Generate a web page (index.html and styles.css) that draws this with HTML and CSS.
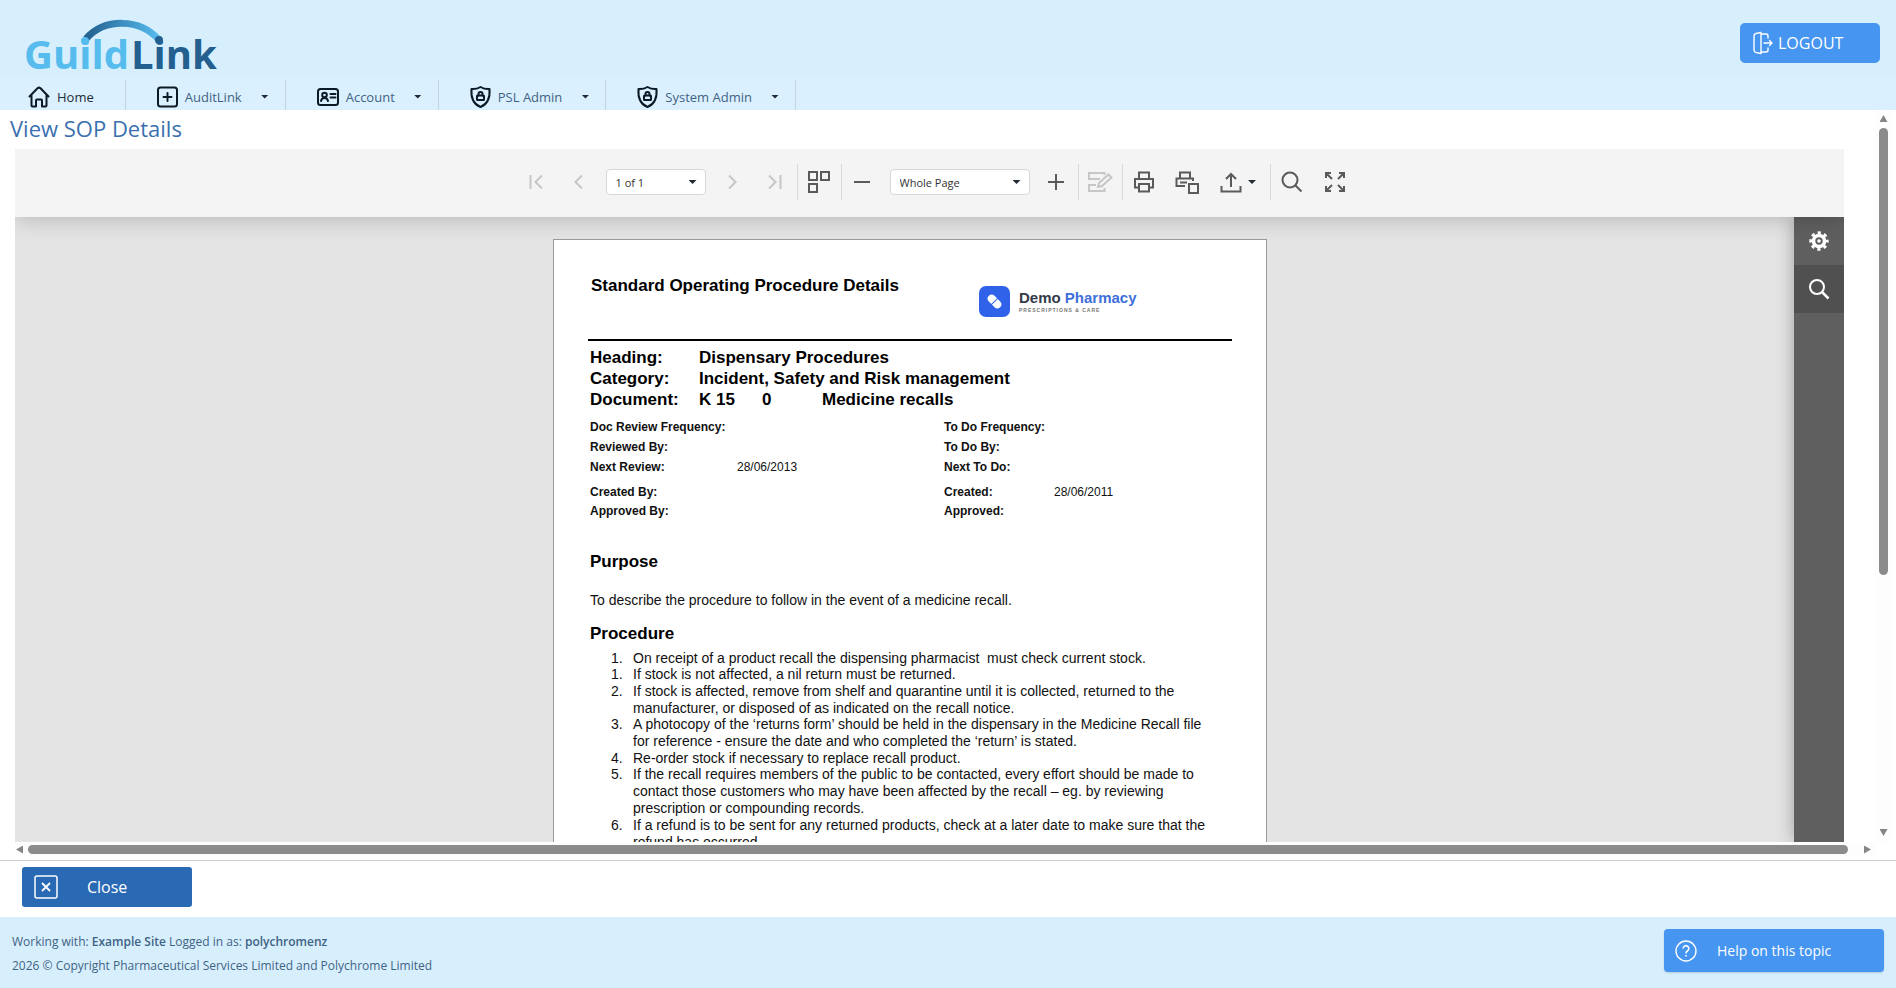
FILE: index.html
```html
<!DOCTYPE html>
<html lang="en">
<head>
<meta charset="utf-8">
<title>View SOP Details</title>
<link rel="stylesheet" href="styles.css">
</head>
<body>
<header class="masthead">
  <a class="brand" href="#" aria-label="GuildLink">
    <svg width="200" height="60" viewBox="0 0 200 60">
      <defs>
        <linearGradient id="arc" x1="0" x2="1" y1="0" y2="0"><stop offset="0" stop-color="#23608f"/><stop offset="1" stop-color="#56bcee"/></linearGradient>
      </defs>
      <text class="brand-text" x="0" y="55"><tspan class="brand-light">Guild</tspan><tspan class="brand-dark" dx="2">Link</tspan></text>
      <path d="M62 25C80 4 116 4 135 26" fill="none" stroke="url(#arc)" stroke-width="7"/>
      <circle cx="61" cy="27" r="4" fill="#56bcee"/>
      <circle cx="135" cy="26" r="4" fill="#23608f"/>
    </svg>
  </a>
  <button class="logout" type="button">
    <svg width="22" height="24" viewBox="0 0 22 24" fill="none" stroke="currentColor" stroke-width="1.4" stroke-linejoin="round" stroke-linecap="round"><path d="M9 1.500L4 2.500Q2 3 2 5v14q0 2 2 2.500l5 1zM9 3h5q2 0 2 2v2M9 21h5q2 0 2-2v-2M12 12h8M17.500 9.500L20 12l-2.500 2.500"/></svg>
    LOGOUT
  </button>
</header>
<nav class="menu">
  <a class="menu-item menu-home" href="#">
    <svg width="22" height="22" viewBox="0 0 22 22" class="ico"><path d="M1.500 10.500L9.500 2.200Q11 1 12.500 2.200L20.500 10.500M3.500 9v10.500q0 1 1 1H8v-6q0-1 1-1h4q1 0 1 1v6h3.500q1 0 1-1V9"/></svg>
    Home</a>
  <a class="menu-item" href="#">
    <svg width="21" height="22" viewBox="0 0 21 22" class="ico"><rect x="1" y="1.500" width="19" height="19" rx="2.500"/><path d="M10.500 7v8M6.500 11h8"/></svg>
    <span>AuditLink</span><i class="caret"></i></a>
  <a class="menu-item" href="#">
    <svg width="22" height="22" viewBox="0 0 22 22" class="ico"><rect x="1" y="3" width="20" height="16" rx="2.500"/><path d="M4 15q.5-3 3.500-3t3.500 3M13.500 8h5M13.500 11.500h5" /><circle cx="7.500" cy="9" r="2.300"/></svg>
    <span>Account</span><i class="caret"></i></a>
  <a class="menu-item" href="#">
    <svg width="21" height="22" viewBox="0 0 21 22" class="ico"><path d="M10.500 1C8 2.500 4.500 3.200 1.500 3c-.6 7 .5 14.500 9 18 8.500-3.500 9.600-11 9-18-3 .2-6.500-.5-9-2z"/><rect x="7" y="9.500" width="7" height="4.500" rx=".5"/><path d="M8.500 9.500V8a2 2 0 0 1 4 0v1.500"/></svg>
    <span>PSL Admin</span><i class="caret"></i></a>
  <a class="menu-item" href="#">
    <svg width="21" height="22" viewBox="0 0 21 22" class="ico"><path d="M10.500 1C8 2.500 4.500 3.200 1.500 3c-.6 7 .5 14.500 9 18 8.500-3.500 9.600-11 9-18-3 .2-6.500-.5-9-2z"/><rect x="7" y="9.500" width="7" height="4.500" rx=".5"/><path d="M8.500 9.500V8a2 2 0 0 1 4 0v1.500"/></svg>
    <span>System Admin</span><i class="caret"></i></a>
</nav>

<main class="workspace">
  <div class="content">
    <h1 class="page-title">View SOP Details</h1>
    <section class="viewer">
      <div class="toolbar">
        <button class="tool" type="button" disabled aria-label="First page"><svg width="24" height="24" viewBox="0 0 24 24"><path d="M6.500 5v14M18 5.500L11.500 12l6.500 6.500"/></svg></button>
        <button class="tool" type="button" disabled aria-label="Previous page"><svg width="24" height="24" viewBox="0 0 24 24"><path d="M15 5.500L8.500 12l6.500 6.500"/></svg></button>
        <label class="picker picker-page"><select aria-label="Page"><option>1 of 1</option></select><i class="caret"></i></label>
        <button class="tool" type="button" disabled aria-label="Next page"><svg width="24" height="24" viewBox="0 0 24 24"><path d="M9 5.500l6.500 6.500L9 18.500"/></svg></button>
        <button class="tool" type="button" disabled aria-label="Last page"><svg width="24" height="24" viewBox="0 0 24 24"><path d="M6 5.500l6.500 6.500L6 18.500M17.500 5v14"/></svg></button>
        <span class="rule"></span>
        <button class="tool" type="button" aria-label="Multipage"><svg width="24" height="24" viewBox="0 0 24 24"><path d="M2 2h8v8H2zM14 2h8v8h-8zM2 14h8v8H2z"/></svg></button>
        <span class="rule"></span>
        <button class="tool" type="button" aria-label="Zoom out"><svg width="24" height="24" viewBox="0 0 24 24"><path d="M3 12h16"/></svg></button>
        <label class="picker picker-zoom"><select aria-label="Zoom"><option>Whole Page</option></select><i class="caret"></i></label>
        <button class="tool" type="button" aria-label="Zoom in"><svg width="24" height="24" viewBox="0 0 24 24"><path d="M4 12h16M12 4v16"/></svg></button>
        <span class="rule"></span>
        <button class="tool" type="button" disabled aria-label="Edit fields"><svg width="26" height="24" viewBox="0 0 26 24"><path d="M17.500 5V3H2v6h11M9 15H2v6h15.500v-3M11 17l1-4 9.500-8.500 3 3L15 16z"/></svg></button>
        <span class="rule"></span>
        <button class="tool" type="button" aria-label="Print"><svg width="24" height="24" viewBox="0 0 24 24"><path d="M7 9V2.500h10V9M6 17.500H3V9h18v8.500h-3M7 14h10v7.500H7z"/></svg></button>
        <button class="tool" type="button" aria-label="Print page"><svg width="24" height="24" viewBox="0 0 24 24"><path d="M5 8V2.500h10V8M10 16H1.500V8.500H18V11M5 12.500h7M14 14h9v9h-9z"/></svg></button>
        <button class="tool tool-export" type="button" aria-label="Export to"><svg width="24" height="24" viewBox="0 0 24 24"><path d="M2.500 16v5.500h19V16M12 17V4M7 9l5-5 5 5"/></svg><i class="caret"></i></button>
        <span class="rule"></span>
        <button class="tool" type="button" aria-label="Search"><svg width="24" height="24" viewBox="0 0 24 24"><circle cx="10" cy="10" r="7.500"/><path d="M15.500 15.500l6 6"/></svg></button>
        <button class="tool" type="button" aria-label="Full screen"><svg width="24" height="24" viewBox="0 0 24 24"><path d="M3 8V3h5M3 3l6 6M16 3h5v5M21 3l-6 6M3 16v5h5M3 21l6-6M16 21h5v-5M21 21l-6-6"/></svg></button>
      </div>
      <div class="stage">
        <div class="canvas">
          <article class="paper">
            <header class="doc-head">
              <h2>Standard Operating Procedure Details</h2>
              <div class="pharmacy">
                <svg width="31" height="31" viewBox="0 0 31 31"><rect width="31" height="31" rx="7" fill="#2f62e8"/><g transform="rotate(45 15.500 15.500)"><rect x="7.500" y="11.500" width="16" height="8" rx="4" fill="#fff"/><path d="M15.500 11v9" stroke="#2f62e8" stroke-width="1"/></g></svg>
                <p><strong>Demo <em>Pharmacy</em></strong><small>PRESCRIPTIONS &amp; CARE</small></p>
              </div>
            </header>
            <dl class="doc-title">
              <dt>Heading:</dt><dd>Dispensary Procedures</dd>
              <dt>Category:</dt><dd>Incident, Safety and Risk management</dd>
              <dt>Document:</dt><dd class="doc-code"><span>K 15</span><span>0</span><span>Medicine recalls</span></dd>
            </dl>
            <dl class="meta">
              <dt>Doc Review Frequency:</dt><dd></dd><dt>To Do Frequency:</dt><dd></dd>
              <dt>Reviewed By:</dt><dd></dd><dt>To Do By:</dt><dd></dd>
              <dt>Next Review:</dt><dd>28/06/2013</dd><dt>Next To Do:</dt><dd></dd>
            </dl>
            <dl class="meta meta-created">
              <dt>Created By:</dt><dd></dd><dt>Created:</dt><dd>28/06/2011</dd>
              <dt>Approved By:</dt><dd></dd><dt>Approved:</dt><dd></dd>
            </dl>
            <h3 class="purpose">Purpose</h3>
            <p class="purpose-text">To describe the procedure to follow in the event of a medicine recall.</p>
            <h3>Procedure</h3>
            <ol class="steps">
              <li><span>1.</span><div>On receipt of a product recall the dispensing pharmacist&nbsp; must check current stock.</div></li>
              <li><span>1.</span><div>If stock is not affected, a nil return must be returned.</div></li>
              <li><span>2.</span><div>If stock is affected, remove from shelf and quarantine until it is collected, returned to the<br>manufacturer, or disposed of as indicated on the recall notice.</div></li>
              <li><span>3.</span><div>A photocopy of the ‘returns form’ should be held in the dispensary in the Medicine Recall file<br>for reference - ensure the date and who completed the ‘return’ is stated.</div></li>
              <li><span>4.</span><div>Re-order stock if necessary to replace recall product.</div></li>
              <li><span>5.</span><div>If the recall requires members of the public to be contacted, every effort should be made to<br>contact those customers who may have been affected by the recall – eg. by reviewing<br>prescription or compounding records.</div></li>
              <li><span>6.</span><div>If a refund is to be sent for any returned products, check at a later date to make sure that the<br>refund has occurred.</div></li>
            </ol>
          </article>
        </div>
        <aside class="side">
          <button type="button" class="side-tab" aria-label="Export options"><svg width="20" height="20" viewBox="0 0 20 20"><g fill="none" stroke="#fff"><circle cx="10" cy="10" r="8.200" stroke-width="3" stroke-dasharray="3.220 3.220" stroke-dashoffset="1.610"/><circle cx="10" cy="10" r="5.500" stroke-width="3.600"/></g><circle cx="10" cy="10" r="1.800" fill="#fff"/></svg></button>
          <button type="button" class="side-tab side-active" aria-label="Search"><svg width="20" height="20" viewBox="0 0 20 20" fill="none" stroke="#fff" stroke-width="2"><circle cx="8" cy="8" r="7"/><path d="M13 13l6.500 6.500" stroke-width="2.500"/></svg></button>
        </aside>
      </div>
    </section>
  </div>
  <div class="vbar"><i class="arrow up"></i><i class="thumb"></i><i class="arrow down"></i></div>
  <div class="hbar"><i class="arrow left"></i><i class="thumb"></i><i class="arrow right"></i></div>
</main>

<div class="actions">
  <button class="close" type="button">
    <svg width="24" height="24" viewBox="0 0 24 24" fill="none" stroke="currentColor" stroke-width="1.500"><rect x="1" y="1" width="22" height="22" rx="2"/><path d="M8 8l8 8M16 8l-8 8" stroke-width="1.800"/></svg>
    <span>Close</span>
  </button>
</div>
<footer class="footer">
  <div>
    <p>Working with: <b>Example Site</b> Logged in as: <b>polychromenz</b></p>
    <p>2026 © Copyright Pharmaceutical Services Limited and Polychrome Limited</p>
  </div>
  <button class="help" type="button">
    <svg width="22" height="22" viewBox="0 0 22 22" fill="none" stroke="currentColor" stroke-width="1.400"><circle cx="11" cy="11" r="10"/><path d="M8.200 8.600a2.800 2.800 0 1 1 4.400 2.200q-1.600 1-1.600 2.600M11 15v1.600" stroke-width="1.600"/></svg>
    <span>Help on this topic</span>
  </button>
</footer>
</body>
</html>
```
FILE: styles.css
```css
* { box-sizing: border-box; }
body, h1, h2, h3, p, dl, dd, ol { margin: 0; }
body {
  display: flex;
  flex-direction: column;
  height: 100vh;
  overflow: hidden;
  background: #fff;
  font-family: "Open Sans", "Noto Sans", sans-serif;
  color: #3f6384;
}
button { border: 0; font-family: inherit; cursor: pointer; }
a { color: inherit; text-decoration: none; }
svg { display: block; flex: none; overflow: visible; }

.masthead {
  display: flex;
  justify-content: space-between;
  align-items: flex-start;
  flex: none;
  height: 75px;
  padding: 14px 16px 0 24px;
  background: #d7effd;
}
.brand-text { font: 700 40px "Open Sans", sans-serif; }
.brand-light { fill: #56bcee; }
.brand-dark { fill: #23608f; }
.logout {
  display: flex;
  align-items: center;
  gap: 4px;
  width: 140px;
  height: 40px;
  margin-top: 9px;
  padding: 0 12px;
  border-radius: 5px;
  background: #4595f1;
  color: #fff;
  font-size: 16px;
}

.menu {
  display: flex;
  flex: none;
  height: 35px;
  padding-top: 5px;
  background: #dbf0fe;
  font-size: 13px;
}
.menu-item {
  display: flex;
  align-items: center;
  gap: 7px;
  padding: 3px 16px 0 31px;
  border-right: 1px solid #c3d3df;
}
.menu-home { padding-left: 28px; padding-right: 31px; color: #1d2b36; }
.menu-item .caret { margin-left: 12px; }
.ico { fill: none; stroke: #0c1a26; stroke-width: 2; stroke-linejoin: round; stroke-linecap: round; }
.caret {
  flex: none;
  width: 8px;
  height: 4px;
  background: #222b33;
  clip-path: polygon(0 0, 100% 0, 50% 100%);
}

.workspace {
  display: grid;
  grid-template-columns: minmax(0, 1fr) 17px;
  grid-template-rows: minmax(0, 1fr) 18px;
  flex: 1;
  min-height: 0;
  padding-right: 4px;
}
.content { display: flex; flex-direction: column; min-height: 0; }
.page-title {
  flex: none;
  height: 39px;
  padding-left: 10px;
  font-size: 22px;
  font-weight: 400;
  line-height: 36px;
  color: #3a70b0;
}
.viewer {
  display: flex;
  flex-direction: column;
  flex: 1;
  min-height: 0;
  margin: 0 31px 0 15px;
  overflow: hidden;
}
.toolbar {
  position: relative;
  z-index: 1;
  display: flex;
  justify-content: center;
  align-items: center;
  flex: none;
  height: 68px;
  padding: 0 0 2px 12px;
  background: #f4f4f4;
  box-shadow: 0 0 24px rgba(0, 0, 0, .24);
}
.tool {
  display: flex;
  justify-content: center;
  align-items: center;
  width: 43px;
  height: 40px;
  padding: 0;
  background: none;
}
.tool svg { fill: none; stroke: #5a5a5a; stroke-width: 2; }
.tool:disabled svg { stroke: #c6c6c6; }
.tool-export { width: 61px; gap: 5px; padding-right: 3px; }
.rule { width: 1px; height: 36px; background: #d9d9d9; }
.picker { position: relative; display: flex; margin: 0 5px; }
.picker select {
  appearance: none;
  width: 100px;
  height: 26px;
  padding: 0 9px;
  border: 1px solid #d8d8d8;
  border-radius: 4px;
  background: #fff;
  color: #333;
  font: 11px "Open Sans", sans-serif;
}
.picker-zoom select { width: 140px; }
.picker .caret { position: absolute; right: 9px; top: 11px; }

.stage { display: flex; flex: 1; min-height: 0; }
.canvas {
  display: flex;
  justify-content: center;
  align-items: flex-start;
  flex: 1;
  padding: 22px 0 0 11px;
  overflow: hidden;
  background: #e4e4e4;
}
.side {
  width: 50px;
  background: #5f5f5f;
  box-shadow: 0 0 18px rgba(0, 0, 0, .3);
}
.side-tab {
  display: flex;
  justify-content: center;
  align-items: center;
  width: 50px;
  height: 48px;
  background: none;
}
.side-active { background: #505050; }

.paper {
  width: 714px;
  height: 1011px;
  padding: 36px 34px 0;
  border: 1px solid #9b9b9b;
  background: #fff;
  color: #111;
  font: 14px/17px "Liberation Sans", Arial, sans-serif;
}
.paper h2, .paper h3, .doc-title { font-size: 17px; font-weight: 700; color: #000; }
.paper h2, .paper h3 { line-height: 20px; }
.paper h3 { padding-left: 2px; }
.doc-head {
  display: grid;
  grid-template-columns: 391px 1fr;
  padding-bottom: 22px;
  border-bottom: 2px solid #000;
}
.doc-head h2 { padding-left: 3px; }
.pharmacy { display: flex; gap: 9px; margin-top: 10px; }
.pharmacy strong { display: block; font-size: 15px; line-height: 18px; color: #333b48; margin-top: 3px; }
.pharmacy em { font-style: normal; color: #3f6fd8; }
.pharmacy small { display: block; font-size: 5px; line-height: 7px; font-weight: 700; letter-spacing: 1px; color: #777; }
.doc-title {
  display: grid;
  grid-template-columns: 109px 1fr;
  margin-top: 6px;
  padding-left: 2px;
  line-height: 21px;
}
.doc-code { display: grid; grid-template-columns: 63px 60px 1fr; }
.meta {
  display: grid;
  grid-template-columns: 147px 207px 110px 1fr;
  margin-top: 7px;
  padding-left: 2px;
  font-size: 12px;
  line-height: 20px;
}
.meta dt { font-weight: 700; }
.meta-created { margin-top: 6px; line-height: 19px; }
.paper .purpose { margin-top: 31px; }
.purpose-text { margin: 20px 0 15px; padding-left: 2px; }
.steps { margin-top: 6px; padding: 0 0 0 23px; list-style: none; }
.steps li { display: grid; grid-template-columns: 22px 1fr; white-space: nowrap; }
.steps li:nth-child(odd) { margin-bottom: -1px; }

.thumb { background: #8b8b8b; border-radius: 5px; }
.arrow { flex: none; width: 8px; height: 7px; background: #858585; }
.up { clip-path: polygon(50% 0, 100% 100%, 0 100%); }
.down { clip-path: polygon(0 0, 100% 0, 50% 100%); }
.left, .right { width: 7px; height: 8px; }
.left { clip-path: polygon(100% 0, 100% 100%, 0 50%); }
.right { clip-path: polygon(0 0, 100% 50%, 0 100%); }
.vbar {
  display: flex;
  flex-direction: column;
  align-items: center;
  padding: 5px 0 6px;
  background: #fdfdfd;
}
.vbar .thumb { width: 9px; height: 62%; margin-top: 6px; }
.vbar .down { margin-top: auto; }
.hbar {
  display: flex;
  align-items: center;
  height: 15px;
  margin-left: 15px;
  padding: 0 4px 0 1px;
  background: #fdfdfd;
}
.hbar .thumb { flex: 1; height: 9px; margin: 0 16px 0 5px; }

.actions { flex: none; padding: 6px 22px 10px; border-top: 1px solid #ccc; }
.close {
  display: flex;
  align-items: center;
  gap: 29px;
  width: 170px;
  height: 40px;
  padding: 0 12px;
  border-radius: 3px;
  background: #2a69b4;
  color: #fff;
  font-size: 16px;
}
.footer {
  display: flex;
  justify-content: space-between;
  flex: none;
  height: 71px;
  padding: 12px 12px 0;
  background: #d7effd;
  font-size: 12px;
}
.footer p { margin-top: 1px; line-height: 23px; }
.footer b { font-weight: 600; }
.help {
  display: flex;
  align-items: center;
  gap: 20px;
  width: 220px;
  height: 43px;
  padding: 0 11px;
  border-radius: 4px;
  background: #4595f1;
  color: #fff;
  font-size: 14px;
  box-shadow: 0 1px 2px rgba(0, 0, 0, .15);
}
```
